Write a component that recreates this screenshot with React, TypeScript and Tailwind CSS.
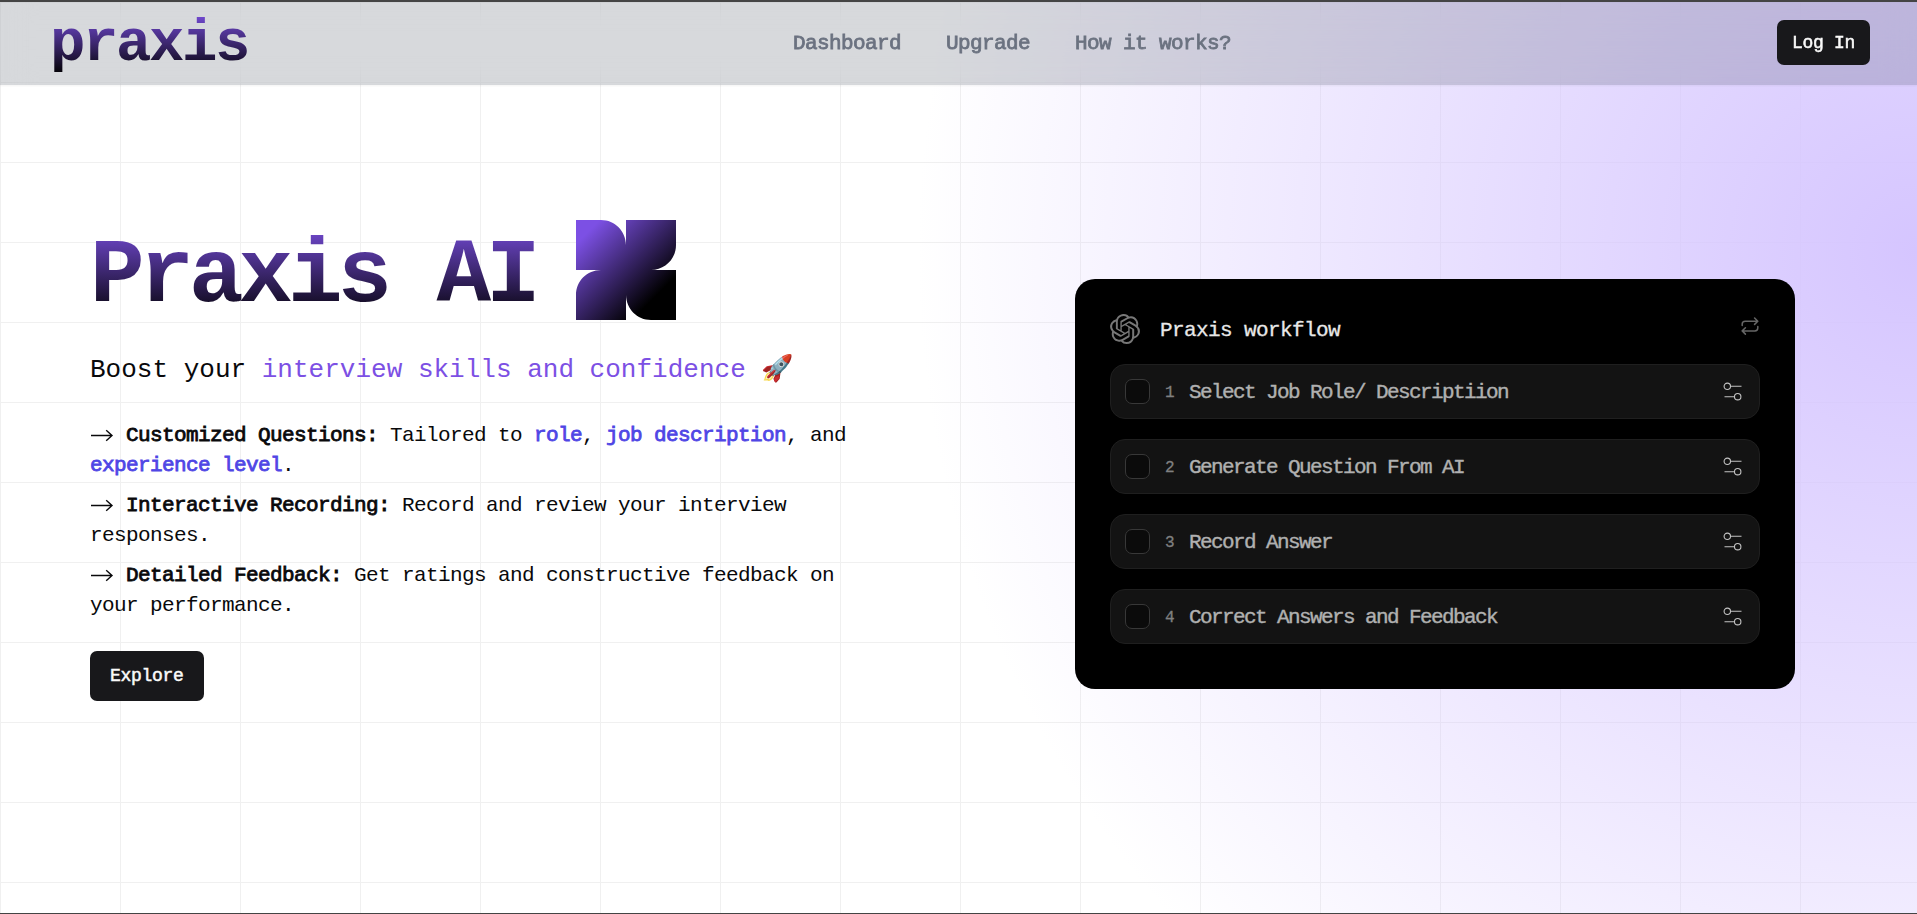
import { SiOpenai } from "react-icons/si";

const steps = [
  "Select Job Role/ Descriptiion",
  "Generate Question From AI",
  "Record Answer",
  "Correct Answers and Feedback",
];

function Arrow() {
  return (
    <svg className="mr-3 inline-block h-5 w-6 align-[-4px]" viewBox="0 0 24 20" fill="none" stroke="currentColor" strokeWidth="1.4">
      <path d="M1 10.500H22M16.200 5.200L22 10.500L16.200 15.800" />
    </svg>
  );
}

function Mark() {
  return (
    <svg className="h-[100px] w-[100px]" viewBox="0 0 100 100">
      <defs>
        <linearGradient id="mark" x1="0" y1="0" x2="1" y2="1">
          <stop offset="0.12" stopColor="#7c50e4" />
          <stop offset="0.78" stopColor="#000" />
        </linearGradient>
      </defs>
      <path
        fill="url(#mark)"
        d="M0 0H25C39 0 49.700 11 50 25V0H100V25C100 39 89 49.700 75 50H100V100H75C61 100 50.300 89 50 75V100H0V75C0 61 11 50.300 25 50H0Z"
      />
    </svg>
  );
}

function Sliders() {
  return (
    <svg className="h-5 w-5" viewBox="0 0 20 20" fill="none" stroke="#c4c4c4" strokeWidth="1.1">
      <circle cx="4.300" cy="4.300" r="3.200" />
      <path d="M7.500 4.300H18.500M1.500 14.700H11.500" />
      <circle cx="14.700" cy="14.700" r="3.200" />
    </svg>
  );
}

function Repeat() {
  return (
    <svg className="mr-px mb-[6px] h-[18px] w-[18px]" viewBox="0 0 18 18" fill="none" stroke="#666" strokeWidth="1.5" strokeLinecap="round" strokeLinejoin="round">
      <path d="M1.200 8.500V7Q1.200 4.200 4.200 4.200H16.600M13.600 1L16.800 4.200L13.600 7.400M16.800 9.500V11Q16.800 13.900 13.800 13.900H1.400M4.400 10.800L1.200 13.900L4.400 17.100" />
    </svg>
  );
}

export default function App() {
  return (
    <div className="h-[914px] w-full overflow-hidden border-t-2 border-b border-[#444] bg-white bg-[linear-gradient(to_right,#f0f0f0_1px,transparent_1px),linear-gradient(to_bottom,#f0f0f0_1px,transparent_1px)] bg-[size:120px_80px] font-['Liberation_Mono',monospace] text-[#09090b]">
      <div className="h-full bg-[radial-gradient(circle_1000px_at_100%_250px,#d5c5ff,transparent)]">
        <header className="flex h-[83px] items-center justify-between bg-[#374151]/20 pr-[47px] pb-[2px] pl-[50px] shadow-xs backdrop-blur-lg">
          <div className="w-[404px] bg-[linear-gradient(to_bottom,#7c50e4,#000)] bg-clip-text pt-[5px] text-[59px] leading-[60px] font-bold tracking-[-2.400px] text-transparent">praxis</div>
          <nav className="flex gap-[45px] pt-[2px] text-[21px] tracking-[-0.600px] text-[#6b7280] [-webkit-text-stroke:0.8px_currentColor]">
            <a>Dashboard</a>
            <a>Upgrade</a>
            <a>How it works?</a>
          </nav>
          <div className="flex w-[300px] justify-end">
            <button className="h-[45px] rounded-[7px] bg-[#18181b] px-[15px] pt-px text-[18px] tracking-[-0.300px] text-[#fafafa] [-webkit-text-stroke:0.5px_currentColor]">Log In</button>
          </div>
        </header>

        <main className="flex items-start justify-between pr-[122px] pl-[90px]">
          <section className="w-[780px] pt-[135px]">
            <div className="flex h-[100px] items-center gap-[40px]">
              <h1 className="bg-[linear-gradient(to_bottom,#7c50e4,#000)] bg-clip-text pt-[13px] text-[91px] leading-[90px] font-bold tracking-[-5.100px] text-transparent">Praxis AI</h1>
              <Mark />
            </div>
            <p className="mt-[33px] text-[26px] leading-[35px] tracking-[0.010px]">
              Boost your <span className="text-[#7c50e4]">interview skills and confidence</span> 🚀
            </p>
            <ul className="mt-[33px] flex flex-col gap-[10px] text-[21px] leading-[30px] tracking-[-0.602px] [&_b]:font-normal [&_b]:[-webkit-text-stroke:0.8px_currentColor]">
              <li>
                <Arrow /><b>Customized Questions:</b> Tailored to <b className="text-[#4f46e5]">role</b>, <b className="text-[#4f46e5]">job description</b>, and <b className="text-[#4f46e5]">experience level</b>.
              </li>
              <li>
                <Arrow /><b>Interactive Recording:</b> Record and review your interview responses.
              </li>
              <li>
                <Arrow /><b>Detailed Feedback:</b> Get ratings and constructive feedback on your performance.
              </li>
            </ul>
            <button className="mt-[30px] h-[50px] rounded-[7px] bg-[#18181b] px-[20px] text-[18px] tracking-[-0.300px] text-[#fafafa] [-webkit-text-stroke:0.5px_currentColor]">Explore</button>
          </section>

          <section className="mt-[194px] h-[410px] w-[720px] rounded-[20px] bg-black px-[35px] pt-[35px]">
            <div className="flex h-[30px] items-center">
              <SiOpenai className="h-[30px] w-[30px] text-[#777]" />
              <h2 className="ml-[20px] flex-1 pt-[3px] text-[21px] tracking-[-0.602px] text-[#e8e8e8] [-webkit-text-stroke:0.3px_currentColor]">Praxis workflow</h2>
              <Repeat />
            </div>
            <ul className="mt-[20px] flex flex-col gap-[20px]">
              {steps.map((step, i) => (
                <li key={step} className="flex h-[55px] items-center rounded-[15px] border border-[#1f1f1f] bg-[#131313] pr-[16px] pl-[14px]">
                  <span className="h-[25px] w-[25px] rounded-[7px] border border-[#383838] bg-[#0b0b0b]" />
                  <span className="ml-[15px] pt-[3px] text-[16px] tracking-[-0.600px] text-[#808080] [-webkit-text-stroke:0.3px_currentColor]">{i + 1}</span>
                  <span className="ml-[15px] flex-1 pt-[3px] text-[21px] tracking-[-1.602px] text-[#b0b0b0] [-webkit-text-stroke:0.4px_currentColor]">{step}</span>
                  <Sliders />
                </li>
              ))}
            </ul>
          </section>
        </main>
      </div>
    </div>
  );
}
